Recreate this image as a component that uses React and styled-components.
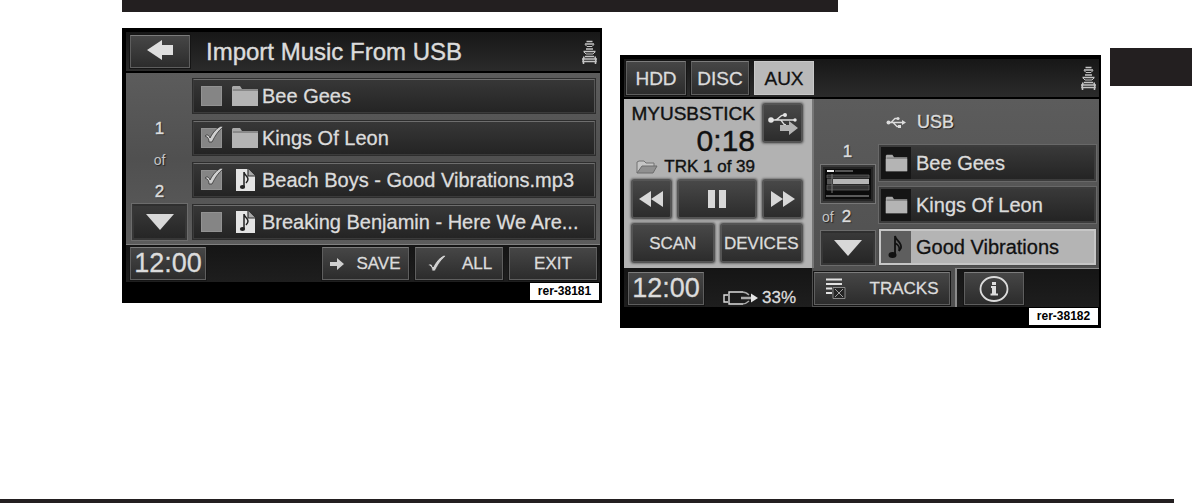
import React from "react";
import styled, { createGlobalStyle, css } from "styled-components";

const GlobalStyle = createGlobalStyle`
  *, *::before, *::after { box-sizing: border-box; }
  body { margin: 0; background: #fff; }
  body, button, input { font-family: "Liberation Sans", Arial, sans-serif; }
  ul { list-style: none; margin: 0; padding: 0; }
  p, h1, h2 { margin: 0; font-weight: 400; }
  svg { display: block; flex: none; }
`;

const Page = styled.main`
  min-height: 100vh;
  display: flex;
  flex-direction: column;
`;
const TopRule = styled.div`
  display: grid;
  grid-template-columns: 122fr 716fr 354fr;
  &::before { content: ""; grid-column: 2; height: 12px; background: #231f20; }
`;
const Figures = styled.section`
  display: grid;
  grid-template-columns: minmax(0, 122fr) minmax(0, 480fr) minmax(0, 18fr) minmax(0, 481fr) minmax(0, 9fr) minmax(0, 82fr);
  align-items: start;
  padding-top: 16px;
`;
const ThumbTab = styled.div`
  grid-column: 6;
  height: 38px;
  margin-top: 20px;
  background: #231f20;
`;
const BottomRule = styled.div`
  margin-top: auto;
  display: grid;
  grid-template-columns: 1174fr 18fr;
  &::before { content: ""; height: 4px; background: #231f20; }
`;

const Screen = styled.article`
  grid-column: ${(p) => p.$column};
  margin-top: ${(p) => p.$drop || 0}px;
  padding: 4px 2px 3px 4px;
  background: #000;
  color: #dcdcdc;
  white-space: nowrap;
`;
const ScreenHeader = styled.header`
  display: flex;
  align-items: center;
  gap: ${(p) => p.$gap}px;
  height: ${(p) => p.$height}px;
  padding: 0 2px 0 ${(p) => p.$left}px;
  background: linear-gradient(#171717, #2b2b2b);
  border-bottom: 2px solid #000;
`;
const Title = styled.h1`
  font-size: 24px;
  line-height: 28px;
  -webkit-text-stroke: 0.4px currentColor;
`;
const Spacer = styled.div`flex: 1;`;

const buttonTones = {
  dark: css`
    color: #dcdcdc;
    background: linear-gradient(#464646, #2c2c2c);
    border: 1px solid #5e5e5e;
    border-top-color: #7c7c7c;
    box-shadow: 0 0 0 1px #151515;
  `,
  light: css`
    color: #111;
    background: #b9b9b9;
    border: 1px solid #c8c8c8;
  `,
  sunk: css`
    color: #dcdcdc;
    background: linear-gradient(#393939, #262626);
    border: 2px solid #373737;
    border-top-color: #2f2f2f;
    box-shadow: 0 0 0 1px #6c6c6c;
  `,
  raised: css`
    color: #dcdcdc;
    background: linear-gradient(#484848, #2c2c2c);
    border: 2px solid #555;
    border-radius: 3px;
    box-shadow: 0 0 2px 1px #777;
  `,
};
const Button = styled.button`
  display: flex;
  align-items: center;
  justify-content: center;
  gap: ${(p) => p.$gap || 0}px;
  width: ${(p) => (p.$width ? `${p.$width}px` : "auto")};
  flex: ${(p) => (p.$grow ? `${p.$grow} 1 0` : "none")};
  height: ${(p) => p.$height || 33}px;
  padding: 0;
  font-size: ${(p) => p.$size || 17}px;
  line-height: 1;
  white-space: nowrap;
  -webkit-text-stroke: 0.3px currentColor;
  ${(p) => buttonTones[p.$tone || "dark"]}
`;

const ImportBody = styled.div`
  display: flex;
  gap: 5px;
  padding: 5px 4px 4px 6px;
  background: linear-gradient(#5c5c5c, #505050 50%, #5c5c5c);
  border-bottom: 1px solid #808080;
`;
const Pager = styled.nav`
  width: 55px;
  display: flex;
  flex-direction: column;
  align-items: center;
  justify-content: flex-end;
  font-size: 16px;
  line-height: 18px;
  text-shadow: 1px 1px 1px #222;
`;
const PageNumber = styled.span`
  font-size: 17px;
  -webkit-text-stroke: 0.4px currentColor;
  margin-bottom: ${(p) => p.$after || 0}px;
`;
const PageOf = styled.span`
  font-size: 14px;
  color: #c4c4c4;
  margin-bottom: ${(p) => p.$after || 0}px;
`;
const FileList = styled.ul`
  flex: 1;
  min-width: 0;
  display: flex;
  flex-direction: column;
  justify-content: flex-end;
  gap: 6px;
`;
const FileRow = styled.label`
  display: flex;
  align-items: center;
  height: 36px;
  padding-left: 7px;
  font-size: 20px;
  line-height: 24px;
  background: linear-gradient(#373737, #242424);
  border: 2px solid #3b3b3b;
  border-top-color: #6e6e6e;
  border-right-color: #565656;
  outline: 1px solid #2d2d2d;
  outline-offset: -1px;
  -webkit-text-stroke: 0.3px currentColor;
`;
const CheckBox = styled.span`
  position: relative;
  flex: none;
  width: 21px;
  height: 20px;
  input {
    appearance: none;
    display: block;
    width: 21px;
    height: 20px;
    margin: 0;
    background: #858585;
    border: 1px solid #929292;
  }
  svg { position: absolute; left: 2px; top: -3px; pointer-events: none; display: none; }
  input:checked + svg { display: block; }
`;
const FileIcon = styled.span`
  width: 40px;
  display: flex;
  justify-content: center;
  padding-left: 6px;
  flex: none;
`;

const Footer = styled.footer`
  display: flex;
  gap: 6px;
  height: 37px;
  padding: 2px 3px 0 4px;
  background: linear-gradient(#151515, #1e1e1e);
`;
const TagLine = styled.div`
  display: flex;
  justify-content: flex-end;
  padding: 1px 1px 0 0;
`;
const Tag = styled.span`
  width: 69px;
  height: 17px;
  background: #fff;
  color: #000;
  font-size: 12px;
  line-height: 17px;
  font-weight: 700;
  text-align: center;
`;

const PlayerGrid = styled.div`
  display: grid;
  grid-template-columns: 188px minmax(0, 1fr);
`;
const NowPlaying = styled.section`
  height: 169px;
  padding: 4px 9px 5px 7px;
  color: #111;
  background: #b2b2b2;
  display: flex;
  flex-direction: column;
  justify-content: space-between;
`;
const TrackInfo = styled.div`
  display: flex;
  justify-content: space-between;
  height: 72px;
  -webkit-text-stroke: 0.4px currentColor;
`;
const TrackText = styled.div`
  display: flex;
  flex-direction: column;
  align-items: flex-end;
  width: 124px;
`;
const Device = styled.h2`font-size: 19px; line-height: 22px;`;
const Elapsed = styled.p`font-size: 30px; line-height: 32px;`;
const TrackNo = styled.p`
  display: flex;
  align-items: center;
  gap: 6px;
  font-size: 17px;
  line-height: 20px;
`;
const ButtonRow = styled.div`display: flex; gap: 5px;`;

const Browser = styled.section`
  padding: 6px 3px 3px 6px;
  background: linear-gradient(#5c5c5c, #505050);
  border-left: 2px solid #777;
  display: flex;
  flex-direction: column;
  justify-content: space-between;
`;
const Source = styled.h2`
  display: flex;
  align-items: center;
  gap: 11px;
  padding: 5px 0 0 66px;
  font-size: 18px;
  line-height: 24px;
  text-shadow: 1px 1px 1px #111;
  -webkit-text-stroke: 0.4px currentColor;
`;
const BrowserColumns = styled.div`display: flex; gap: 4px;`;
const TrackButton = styled.button`
  display: flex;
  align-items: center;
  width: 100%;
  height: 36px;
  padding: 0;
  font-size: 20px;
  line-height: 24px;
  text-align: left;
  white-space: nowrap;
  -webkit-text-stroke: 0.3px currentColor;
  color: ${(p) => (p.$active ? "#111" : "#dcdcdc")};
  background: ${(p) => (p.$active ? "#b4b4b4" : "linear-gradient(#393939, #242424)")};
  border: 2px solid ${(p) => (p.$active ? "#c6c6c6" : "#3c3c3c")};
  outline: 1px solid ${(p) => (p.$active ? "#4a4a4a" : "#686868")};
`;
const TrackIcon = styled.span`
  display: flex;
  align-items: center;
  justify-content: center;
  width: 30px;
  height: 32px;
  margin-right: 5px;
  flex: none;
  background: ${(p) => (p.$active ? "#5e5e5e" : "#151515")};
`;
const PageThumb = styled.span`
  display: flex;
  justify-content: center;
  align-items: center;
  width: 54px;
  height: 38px;
  margin-bottom: 5px;
  background: #242424;
  border: 2px solid #3a3a3a;
  outline: 1px solid #777;
`;
const PageTotal = styled.span`
  display: flex;
  gap: 8px;
  align-self: flex-start;
  align-items: baseline;
  padding-left: 2px;
  margin-bottom: 5px;
`;
const StatusBar = styled.footer`
  display: flex;
  justify-content: space-between;
  height: 39px;
  padding: 4px 16px 0 4px;
  background: linear-gradient(#151515, #1e1e1e);
`;
const Battery = styled.p`
  display: flex;
  align-items: center;
  gap: 3px;
  padding-top: 16px;
  font-size: 17px;
  line-height: 18px;
  -webkit-text-stroke: 0.3px currentColor;
`;
const BrowserBar = styled.footer`
  display: flex;
  height: 39px;
  background: linear-gradient(#151515, #1e1e1e);
`;
const TabFrame = styled.div`
  width: 145px;
  padding: 4px 5px 0 2px;
  background: #505050;
  border-right: 2px solid #8a8a8a;
`;
const BarRest = styled.div`
  flex: 1;
  padding: 3px 0 0 7px;
  border-top: 1px solid #8a8a8a;
`;

const BackArrow = () => (
  <svg width="28" height="24" viewBox="0 0 28 24">
    <path d="M1 10 16 0v5h11v10H16v5z" fill="#dedede" />
  </svg>
);
const DownArrow = () => (
  <svg width="30" height="18" viewBox="0 0 30 18">
    <path d="M1 1h28L15 17z" fill="#d8d8d8" />
  </svg>
);
const Traffic = () => (
  <svg width="17" height="24" viewBox="0 0 17 24" fill="none" stroke="#c4c4c4" strokeWidth="1.6">
    <path d="M5.500 1.500h6M4 4h9" />
    <path d="M4 4.500 6 6.500h5l2-2" strokeWidth="1" />
    <path d="M5 9h7M2.500 11.500h12" />
    <path d="M3 12l2 2h7l2-2" strokeWidth="1" />
    <path d="M4 16.500h9M1 19h15M3 16.500l-1 5h13l-1-5M2.500 21v3M14.500 21v3" />
  </svg>
);
const Folder = ({ width = 28, height = 22 }) => (
  <svg width={width} height={height} viewBox="0 0 28 22" preserveAspectRatio="none">
    <path d="M1 4V2l1-1h7l2 3h16v17H1z" fill="#a9a9a9" />
    <path d="M1 6h26v15H1z" fill="#b4b4b4" />
    <path d="M2 5h25" stroke="#6b6b6b" />
  </svg>
);
const SongFile = () => (
  <svg width="19" height="22" viewBox="0 0 19 22">
    <path d="M0 0h12l7 7v15H0z" fill="#e4e4e4" />
    <path d="M12 0v7h7" fill="#aaa" stroke="#333" strokeWidth="1.2" />
    <path d="M8 18V3c0 3 4 4 4 7 0 2-1 3-2 4" fill="none" stroke="#222" strokeWidth="1.5" />
    <ellipse cx="6.500" cy="18" rx="2.600" ry="2" fill="#222" />
  </svg>
);
const Check = ({ width = 21, height = 19 }) => (
  <svg width={width} height={height} viewBox="0 0 21 19">
    <path d="M2 11c2-2 4-1 5 2C10 7 14 3 18 1l2 1c-5 4-8 9-11 15H6C6 14 5 12 2 11z" fill="#d0d0d0" stroke="#333" strokeWidth="0.8" />
  </svg>
);
const SaveArrow = () => (
  <svg width="14" height="12" viewBox="0 0 14 12">
    <path d="M0 4h7V0l7 6-7 6V8H0z" fill="#cfcfcf" />
  </svg>
);
const UsbTrident = ({ width, height }) => (
  <svg width={width} height={height} viewBox="0 0 20 13" fill="none" stroke="#dcdcdc" strokeWidth="1.3">
    <path d="M2 6.500h15M5 6.500l4-4h2M7 6.500l4 4h2" />
    <circle cx="2.500" cy="6.500" r="2" fill="#dcdcdc" stroke="none" />
    <circle cx="12" cy="2.500" r="1.600" fill="#dcdcdc" stroke="none" />
    <path d="M16 4l4 2.500L16 9zM12 9h3v3h-3z" fill="#dcdcdc" stroke="none" />
  </svg>
);
const UsbTransfer = () => (
  <svg width="32" height="24" viewBox="0 0 32 24" fill="none" stroke="#dedede" strokeWidth="1.500">
    <path d="M4 9h24M8 9c4 0 4-5 9-5M13 9c3 0 2 5 6 5" />
    <circle cx="4" cy="9" r="2.800" fill="#e4e4e4" stroke="none" />
    <circle cx="18" cy="4" r="2" fill="#e4e4e4" stroke="none" />
    <circle cx="28" cy="9" r="1.700" fill="#e4e4e4" stroke="none" />
    <path d="M13 14h9v-4l9 7-9 7v-4h-9z" fill="#b4b4b4" stroke="none" />
  </svg>
);
const OpenFolder = () => (
  <svg width="22" height="14" viewBox="0 0 22 14">
    <path d="M1 13V2l2-1h5l2 2h8v3" fill="#c5c5c5" stroke="#727272" />
    <path d="M1 13 6 6h15l-4 7z" fill="#909090" stroke="#6c6c6c" />
  </svg>
);
const Skip = ({ back }) => (
  <svg width="25" height="16" viewBox="0 0 25 16">
    <path d={back ? "M12 0v16L0 8zM24 0v16L12 8z" : "M1 0l12 8-12 8zM13 0l12 8-12 8z"} fill="#d8d8d8" />
  </svg>
);
const Pause = () => (
  <svg width="18" height="18" viewBox="0 0 18 18">
    <path d="M0 0h7v18H0zM11 0h7v18h-7z" fill="#d8d8d8" />
  </svg>
);
const BatteryIcon = () => (
  <svg width="36" height="14" viewBox="0 0 36 14" fill="none" stroke="#dcdcdc" strokeWidth="1.4">
    <path d="M5 4H1v7h4M20 1H6v12h14" />
    <path d="M19 1c3 0 5 1 7 3M19 13c3 0 5-1 7-3" stroke="#aaa" />
    <path d="M18 7h12" stroke="#aaa" strokeWidth="2.500" />
    <path d="M28 2.500l7 4.500-7 4.500z" fill="#e4e4e4" stroke="none" />
  </svg>
);
const Note = () => (
  <svg width="16" height="24" viewBox="0 0 16 24">
    <path d="M7 20V1c1 5 7 6 6 12l-2 3c1-4 0-6-4-8" fill="none" stroke="#111" strokeWidth="1.8" />
    <ellipse cx="4.500" cy="20" rx="4" ry="3" fill="#111" />
  </svg>
);
const ListThumb = () => (
  <svg width="46" height="30" viewBox="0 0 46 30">
    <path d="M0 0h46v30H0z" fill="#0b0b0b" />
    <path d="M2 2h7" stroke="#eee" strokeWidth="2" />
    <path d="M10 2h18" stroke="#555" strokeWidth="2" />
    <path d="M2 6h42v3H2zM2 16h42v5H2z" fill="#343434" stroke="#666" strokeWidth="0.7" />
    <path d="M8 10h36v5H8z" fill="#b5b5b5" />
    <path d="M2 10h5v5H2z" fill="#555" />
    <path d="M1 27h43" stroke="#aaa" />
    <path d="M7 5v19" stroke="#777" />
  </svg>
);
const TracksIcon = () => (
  <svg width="20" height="21" viewBox="0 0 20 21">
    <path d="M0 1.500h16M0 6h16M0 10.500h6M0 15h6" stroke="#e2e2e2" strokeWidth="2" />
    <path d="M7 9.500h12v11H7z" fill="#252525" stroke="#8a8a8a" />
    <path d="M9 11l8 8M17 11l-8 8" stroke="#a0a0a0" />
  </svg>
);
const Info = () => (
  <svg width="30" height="26" viewBox="0 0 30 26" fill="none" stroke="#dcdcdc">
    <ellipse cx="15" cy="13" rx="13.500" ry="12" strokeWidth="1.8" />
    <path d="M12 11h4v7M11.500 18.500h7.500" strokeWidth="2" />
    <path d="M15 11v7" strokeWidth="4" />
    <path d="M13 7.500h4" strokeWidth="3" />
  </svg>
);

const files = [
  { name: "Bee Gees", folder: true, checked: false },
  { name: "Kings Of Leon", folder: true, checked: true },
  { name: "Beach Boys - Good Vibrations.mp3", folder: false, checked: true },
  { name: "Breaking Benjamin - Here We Are...", folder: false, checked: false },
];
const tracks = [
  { name: "Bee Gees" },
  { name: "Kings Of Leon" },
  { name: "Good Vibrations", active: true },
];

const ImportScreen = () => (
  <Screen $column={2}>
    <ScreenHeader $height={41} $left={4} $gap={16}>
      <Button $width={60} aria-label="Back"><BackArrow /></Button>
      <Title>Import Music From USB</Title>
      <Spacer />
      <Traffic />
    </ScreenHeader>
    <ImportBody>
      <Pager aria-label="Pages">
        <PageNumber $after={13}>1</PageNumber>
        <PageOf $after={14}>of</PageOf>
        <PageNumber $after={3}>2</PageNumber>
        <Button $width={55} $height={36} $tone="sunk" aria-label="Next page"><DownArrow /></Button>
      </Pager>
      <FileList>
        {files.map((f) => (
          <li key={f.name}>
            <FileRow>
              <CheckBox>
                <input type="checkbox" defaultChecked={f.checked} />
                <Check />
              </CheckBox>
              <FileIcon>{f.folder ? <Folder /> : <SongFile />}</FileIcon>
              {f.name}
            </FileRow>
          </li>
        ))}
      </FileList>
    </ImportBody>
    <Footer>
      <Button $width={76} $size={27}>12:00</Button>
      <Spacer />
      <Button $width={87} $gap={12}><SaveArrow />SAVE</Button>
      <Button $width={88} $gap={15}><Check />ALL</Button>
      <Button $width={88}>EXIT</Button>
    </Footer>
    <TagLine><Tag>rer-38181</Tag></TagLine>
  </Screen>
);

const PlayerScreen = () => (
  <Screen $column={4} $drop={27}>
    <ScreenHeader $height={40} $left={2} $gap={5}>
      <Button $width={60} $height={34} $size={19}>HDD</Button>
      <Button $width={58} $height={34} $size={19}>DISC</Button>
      <Button $width={60} $height={34} $size={19} $tone="light">AUX</Button>
      <Spacer />
      <Traffic />
    </ScreenHeader>
    <PlayerGrid>
      <NowPlaying>
        <TrackInfo>
          <TrackText>
            <Device>MYUSBSTICK</Device>
            <Elapsed>0:18</Elapsed>
            <TrackNo><OpenFolder />TRK 1 of 39</TrackNo>
          </TrackText>
          <Button $width={41} $height={40} $tone="raised" aria-label="USB source">
            <UsbTransfer />
          </Button>
        </TrackInfo>
        <ButtonRow>
          <Button $width={41} $height={40} $tone="raised" aria-label="Previous"><Skip back /></Button>
          <Button $grow={1} $height={40} $tone="raised" aria-label="Pause"><Pause /></Button>
          <Button $width={41} $height={40} $tone="raised" aria-label="Next"><Skip /></Button>
        </ButtonRow>
        <ButtonRow>
          <Button $grow={1} $height={40} $tone="raised">SCAN</Button>
          <Button $grow={1} $height={40} $tone="raised">DEVICES</Button>
        </ButtonRow>
      </NowPlaying>
      <Browser>
        <Source><UsbTrident width={20} height={13} />USB</Source>
        <BrowserColumns>
          <Pager aria-label="Track pages">
            <PageNumber $after={4}>1</PageNumber>
            <PageThumb><ListThumb /></PageThumb>
            <PageTotal><PageOf>of</PageOf><PageNumber>2</PageNumber></PageTotal>
            <Button $width={54} $height={34} $tone="sunk" aria-label="Next page"><DownArrow /></Button>
          </Pager>
          <FileList>
            {tracks.map((t) => (
              <li key={t.name}>
                <TrackButton $active={t.active}>
                  <TrackIcon $active={t.active}>
                    {t.active ? <Note /> : <Folder width={23} height={18} />}
                  </TrackIcon>
                  {t.name}
                </TrackButton>
              </li>
            ))}
          </FileList>
        </BrowserColumns>
      </Browser>
      <StatusBar>
        <Button $width={76} $size={27}>12:00</Button>
        <Battery><BatteryIcon />33%</Battery>
      </StatusBar>
      <BrowserBar>
        <TabFrame>
          <Button $width={136} $gap={24}><TracksIcon />TRACKS</Button>
        </TabFrame>
        <BarRest>
          <Button $width={60} aria-label="Information"><Info /></Button>
        </BarRest>
      </BrowserBar>
    </PlayerGrid>
    <TagLine><Tag>rer-38182</Tag></TagLine>
  </Screen>
);

export default function App() {
  return (
    <Page>
      <GlobalStyle />
      <TopRule />
      <Figures>
        <ImportScreen />
        <PlayerScreen />
        <ThumbTab />
      </Figures>
      <BottomRule />
    </Page>
  );
}
